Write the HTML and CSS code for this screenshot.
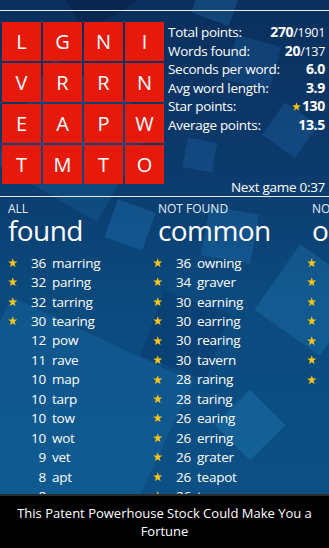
FILE: index.html
```html
<!DOCTYPE html>
<html lang="en">
<head>
<meta charset="utf-8">
<title>Word game results</title>
<link rel="stylesheet" href="styles.css">
</head>
<body>
<div class="screen">
  <div class="bg" aria-hidden="true">
    <span class="sq s1"></span>
    <span class="sq s2"></span>
    <span class="sq s3"></span>
    <span class="sq s4"></span>
    <span class="sq s5"></span>
    <span class="sq s6"></span>
    <span class="sq s7"></span>
    <span class="sq s8"></span>
    <span class="sq s9"></span>
    <span class="sq s10"></span>
    <span class="sq s11"></span>
    <span class="sq s12"></span>
  </div>

  <div class="rule rule-top"></div>

  <section class="game">
    <div class="board">
      <div class="tile">L</div><div class="tile">G</div><div class="tile">N</div><div class="tile">I</div>
      <div class="tile">V</div><div class="tile">R</div><div class="tile">R</div><div class="tile">N</div>
      <div class="tile">E</div><div class="tile">A</div><div class="tile">P</div><div class="tile">W</div>
      <div class="tile">T</div><div class="tile">M</div><div class="tile">T</div><div class="tile">O</div>
    </div>
    <div class="stats">
      <div class="stat-list">
        <div class="stat"><span class="label">Total points:</span><span class="value"><b>270</b><span class="of">/1901</span></span></div>
        <div class="stat"><span class="label">Words found:</span><span class="value"><b>20</b><span class="of">/137</span></span></div>
        <div class="stat"><span class="label">Seconds per word:</span><span class="value"><b>6.0</b></span></div>
        <div class="stat"><span class="label">Avg word length:</span><span class="value"><b>3.9</b></span></div>
        <div class="stat"><span class="label">Star points:</span><span class="value"><svg class="star-sm" viewBox="0 0 10 10"><polygon points="5,0.3 6.2,3.7 9.8,3.8 6.9,6 8,9.6 5,7.5 2,9.6 3.1,6 0.2,3.8 3.8,3.7"/></svg><b>130</b></span></div>
        <div class="stat"><span class="label">Average points:</span><span class="value"><b>13.5</b></span></div>
      </div>
      <div class="next">Next game 0:37</div>
    </div>
  </section>

  <div class="rule rule-mid"></div>

  <section class="lists">
    <div class="col col-all">
      <div class="col-head"><div class="kicker">ALL</div><div class="title">found</div></div>
      <ul class="words">
        <li><svg class="star" viewBox="0 0 10 10"><polygon points="5,0.3 6.2,3.7 9.8,3.8 6.9,6 8,9.6 5,7.5 2,9.6 3.1,6 0.2,3.8 3.8,3.7"/></svg><span class="pts">36</span><span class="word">marring</span></li>
        <li><svg class="star" viewBox="0 0 10 10"><polygon points="5,0.3 6.2,3.7 9.8,3.8 6.9,6 8,9.6 5,7.5 2,9.6 3.1,6 0.2,3.8 3.8,3.7"/></svg><span class="pts">32</span><span class="word">paring</span></li>
        <li><svg class="star" viewBox="0 0 10 10"><polygon points="5,0.3 6.2,3.7 9.8,3.8 6.9,6 8,9.6 5,7.5 2,9.6 3.1,6 0.2,3.8 3.8,3.7"/></svg><span class="pts">32</span><span class="word">tarring</span></li>
        <li><svg class="star" viewBox="0 0 10 10"><polygon points="5,0.3 6.2,3.7 9.8,3.8 6.9,6 8,9.6 5,7.5 2,9.6 3.1,6 0.2,3.8 3.8,3.7"/></svg><span class="pts">30</span><span class="word">tearing</span></li>
        <li><span class="nostar"></span><span class="pts">12</span><span class="word">pow</span></li>
        <li><span class="nostar"></span><span class="pts">11</span><span class="word">rave</span></li>
        <li><span class="nostar"></span><span class="pts">10</span><span class="word">map</span></li>
        <li><span class="nostar"></span><span class="pts">10</span><span class="word">tarp</span></li>
        <li><span class="nostar"></span><span class="pts">10</span><span class="word">tow</span></li>
        <li><span class="nostar"></span><span class="pts">10</span><span class="word">wot</span></li>
        <li><span class="nostar"></span><span class="pts">9</span><span class="word">vet</span></li>
        <li><span class="nostar"></span><span class="pts">8</span><span class="word">apt</span></li>
        <li><span class="nostar"></span><span class="pts">8</span><span class="word">mar</span></li>
      </ul>
    </div>
    <div class="col col-common">
      <div class="col-head"><div class="kicker">NOT FOUND</div><div class="title">common</div></div>
      <ul class="words">
        <li><svg class="star" viewBox="0 0 10 10"><polygon points="5,0.3 6.2,3.7 9.8,3.8 6.9,6 8,9.6 5,7.5 2,9.6 3.1,6 0.2,3.8 3.8,3.7"/></svg><span class="pts">36</span><span class="word">owning</span></li>
        <li><svg class="star" viewBox="0 0 10 10"><polygon points="5,0.3 6.2,3.7 9.8,3.8 6.9,6 8,9.6 5,7.5 2,9.6 3.1,6 0.2,3.8 3.8,3.7"/></svg><span class="pts">34</span><span class="word">graver</span></li>
        <li><svg class="star" viewBox="0 0 10 10"><polygon points="5,0.3 6.2,3.7 9.8,3.8 6.9,6 8,9.6 5,7.5 2,9.6 3.1,6 0.2,3.8 3.8,3.7"/></svg><span class="pts">30</span><span class="word">earning</span></li>
        <li><svg class="star" viewBox="0 0 10 10"><polygon points="5,0.3 6.2,3.7 9.8,3.8 6.9,6 8,9.6 5,7.5 2,9.6 3.1,6 0.2,3.8 3.8,3.7"/></svg><span class="pts">30</span><span class="word">earring</span></li>
        <li><svg class="star" viewBox="0 0 10 10"><polygon points="5,0.3 6.2,3.7 9.8,3.8 6.9,6 8,9.6 5,7.5 2,9.6 3.1,6 0.2,3.8 3.8,3.7"/></svg><span class="pts">30</span><span class="word">rearing</span></li>
        <li><svg class="star" viewBox="0 0 10 10"><polygon points="5,0.3 6.2,3.7 9.8,3.8 6.9,6 8,9.6 5,7.5 2,9.6 3.1,6 0.2,3.8 3.8,3.7"/></svg><span class="pts">30</span><span class="word">tavern</span></li>
        <li><svg class="star" viewBox="0 0 10 10"><polygon points="5,0.3 6.2,3.7 9.8,3.8 6.9,6 8,9.6 5,7.5 2,9.6 3.1,6 0.2,3.8 3.8,3.7"/></svg><span class="pts">28</span><span class="word">raring</span></li>
        <li><svg class="star" viewBox="0 0 10 10"><polygon points="5,0.3 6.2,3.7 9.8,3.8 6.9,6 8,9.6 5,7.5 2,9.6 3.1,6 0.2,3.8 3.8,3.7"/></svg><span class="pts">28</span><span class="word">taring</span></li>
        <li><svg class="star" viewBox="0 0 10 10"><polygon points="5,0.3 6.2,3.7 9.8,3.8 6.9,6 8,9.6 5,7.5 2,9.6 3.1,6 0.2,3.8 3.8,3.7"/></svg><span class="pts">26</span><span class="word">earing</span></li>
        <li><svg class="star" viewBox="0 0 10 10"><polygon points="5,0.3 6.2,3.7 9.8,3.8 6.9,6 8,9.6 5,7.5 2,9.6 3.1,6 0.2,3.8 3.8,3.7"/></svg><span class="pts">26</span><span class="word">erring</span></li>
        <li><svg class="star" viewBox="0 0 10 10"><polygon points="5,0.3 6.2,3.7 9.8,3.8 6.9,6 8,9.6 5,7.5 2,9.6 3.1,6 0.2,3.8 3.8,3.7"/></svg><span class="pts">26</span><span class="word">grater</span></li>
        <li><svg class="star" viewBox="0 0 10 10"><polygon points="5,0.3 6.2,3.7 9.8,3.8 6.9,6 8,9.6 5,7.5 2,9.6 3.1,6 0.2,3.8 3.8,3.7"/></svg><span class="pts">26</span><span class="word">teapot</span></li>
        <li><svg class="star" viewBox="0 0 10 10"><polygon points="5,0.3 6.2,3.7 9.8,3.8 6.9,6 8,9.6 5,7.5 2,9.6 3.1,6 0.2,3.8 3.8,3.7"/></svg><span class="pts">26</span><span class="word">tanner</span></li>
      </ul>
    </div>
    <div class="col col-obscure">
      <div class="col-head"><div class="kicker">NOT FOUND</div><div class="title">obscure</div></div>
      <ul class="words">
        <li><svg class="star" viewBox="0 0 10 10"><polygon points="5,0.3 6.2,3.7 9.8,3.8 6.9,6 8,9.6 5,7.5 2,9.6 3.1,6 0.2,3.8 3.8,3.7"/></svg><span class="pts">32</span><span class="word">varring</span></li>
        <li><svg class="star" viewBox="0 0 10 10"><polygon points="5,0.3 6.2,3.7 9.8,3.8 6.9,6 8,9.6 5,7.5 2,9.6 3.1,6 0.2,3.8 3.8,3.7"/></svg><span class="pts">30</span><span class="word">pareo</span></li>
        <li><svg class="star" viewBox="0 0 10 10"><polygon points="5,0.3 6.2,3.7 9.8,3.8 6.9,6 8,9.6 5,7.5 2,9.6 3.1,6 0.2,3.8 3.8,3.7"/></svg><span class="pts">28</span><span class="word">waring</span></li>
        <li><svg class="star" viewBox="0 0 10 10"><polygon points="5,0.3 6.2,3.7 9.8,3.8 6.9,6 8,9.6 5,7.5 2,9.6 3.1,6 0.2,3.8 3.8,3.7"/></svg><span class="pts">26</span><span class="word">graven</span></li>
        <li><svg class="star" viewBox="0 0 10 10"><polygon points="5,0.3 6.2,3.7 9.8,3.8 6.9,6 8,9.6 5,7.5 2,9.6 3.1,6 0.2,3.8 3.8,3.7"/></svg><span class="pts">26</span><span class="word">rewan</span></li>
        <li><svg class="star" viewBox="0 0 10 10"><polygon points="5,0.3 6.2,3.7 9.8,3.8 6.9,6 8,9.6 5,7.5 2,9.6 3.1,6 0.2,3.8 3.8,3.7"/></svg><span class="pts">24</span><span class="word">tawer</span></li>
        <li><svg class="star" viewBox="0 0 10 10"><polygon points="5,0.3 6.2,3.7 9.8,3.8 6.9,6 8,9.6 5,7.5 2,9.6 3.1,6 0.2,3.8 3.8,3.7"/></svg><span class="pts">24</span><span class="word">apter</span></li>
        <li><span class="nostar"></span><span class="pts">22</span><span class="word">ravin</span></li>
        <li><span class="nostar"></span><span class="pts">20</span><span class="word">arpen</span></li>
      </ul>
    </div>
  </section>

  <aside class="ad">
    <p>This Patent Powerhouse Stock Could Make You a Fortune</p>
  </aside>
</div>
</body>
</html>
```

FILE: styles.css
```css
* { box-sizing: border-box; }

html, body {
  margin: 0;
  padding: 0;
}

body {
  width: 329px;
  height: 548px;
  overflow: hidden;
  font-family: "Open Sans", "Noto Sans", "Liberation Sans", sans-serif;
  color: #ffffff;
  background: #0b4377;
}

.screen {
  position: relative;
  width: 329px;
  height: 548px;
  overflow: hidden;
  display: flex;
  flex-direction: column;
  background: linear-gradient(180deg, #0a2f5c 0%, #0b3a6c 30%, #0b4a7e 55%, #0c5287 100%);
}

/* decorative scattered squares behind everything */
.bg {
  position: absolute;
  inset: 0;
  z-index: 0;
  pointer-events: none;
}
.sq {
  position: absolute;
  display: block;
  background: rgba(40, 130, 195, 0.28);
}
.s1 { left: 70px;  top: -20px; width: 60px; height: 40px; transform: rotate(-30deg); background: rgba(5, 30, 70, 0.5); }
.s2 { left: 195px; top: -10px; width: 40px; height: 30px; transform: rotate(20deg); }
.s3 { left: 230px; top: 40px;  width: 46px; height: 46px; transform: rotate(15deg); background: rgba(40, 120, 190, 0.22); }
.s4 { left: 270px; top: 110px; width: 40px; height: 40px; transform: rotate(35deg); background: rgba(40, 120, 190, 0.25); }
.s5 { left: 185px; top: 140px; width: 30px; height: 30px; transform: rotate(10deg); background: rgba(40, 120, 190, 0.25); }
.s6 { left: 110px; top: 205px; width: 40px; height: 40px; transform: rotate(20deg); background: rgba(40, 130, 200, 0.3); }
.s7 { left: 205px; top: 210px; width: 50px; height: 50px; transform: rotate(10deg); background: rgba(40, 130, 200, 0.25); }
.s8 { left: -40px; top: 330px; width: 200px; height: 200px; transform: rotate(25deg); background: rgba(30, 120, 180, 0.28); }
.s9 { left: 270px; top: 260px; width: 80px; height: 80px; transform: rotate(35deg); background: rgba(40, 140, 200, 0.25); }
.s10 { left: 225px; top: 400px; width: 50px; height: 50px; transform: rotate(45deg); background: rgba(40, 140, 200, 0.3); }
.s11 { left: 150px; top: 300px; width: 70px; height: 70px; transform: rotate(20deg); background: rgba(8, 50, 100, 0.35); }
.s12 { left: 15px;  top: 80px;  width: 120px; height: 120px; transform: rotate(30deg); background: rgba(30, 110, 170, 0.25); }

.rule {
  position: relative;
  z-index: 1;
  height: 1px;
  background: #e6edf4;
  flex: none;
}
.rule-top { margin-top: 10px; }

.game {
  position: relative;
  z-index: 1;
  flex: none;
  height: 185px;
  padding: 11px 4px 0 2px;
  display: flex;
  gap: 4px;
}

.board {
  display: grid;
  grid-template-columns: repeat(4, 39px);
  grid-template-rows: repeat(4, 39px);
  gap: 2px;
  align-self: flex-start;
}
.tile {
  background: #e51a0b;
  display: flex;
  align-items: center;
  justify-content: center;
  font-size: 20px;
  line-height: 1;
  color: #ffffff;
}

.stats {
  flex: 1;
  display: flex;
  flex-direction: column;
  font-size: 13.5px;
  letter-spacing: -0.3px;
}
.stat-list { padding-top: 1px; }
.stat {
  display: flex;
  justify-content: space-between;
  align-items: baseline;
  height: 18.5px;
  line-height: 18.5px;
}
.value b { font-weight: 700; font-size: 14px; }
.value .of { font-size: 12.5px; }
.value { display: flex; align-items: baseline; }
.star-sm {
  width: 9px;
  height: 9px;
  fill: #f6c416;
  margin-right: 1px;
  align-self: center;
}
.next {
  margin-top: auto;
  text-align: right;
  line-height: 17px;
  padding-bottom: 0;
}

.lists {
  position: relative;
  z-index: 1;
  flex: 1;
  min-height: 0;
  overflow: hidden;
  display: flex;
  padding-left: 8px;
}

.col { flex: none; }
.col-all { width: 145px; }
.col-common { width: 154px; }
.col-obscure { width: 160px; }
.col-common .col-head,
.col-obscure .col-head { padding-left: 5px; }

.col-head { padding-top: 4px; }
.kicker {
  font-size: 12px;
  line-height: 15px;
  color: #e4ecf4;
}
.title {
  font-size: 28px;
  line-height: 28px;
  letter-spacing: -0.6px;
}

.words {
  list-style: none;
  margin: 9px 0 0 0;
  padding: 0;
}
.words li {
  display: flex;
  align-items: center;
  height: 19.45px;
  font-size: 13.5px;
  letter-spacing: -0.25px;
  white-space: nowrap;
}
.star, .nostar {
  width: 9.5px;
  height: 9.5px;
  flex: none;
}
.star { fill: #f6c416; }
.pts {
  width: 28.5px;
  text-align: right;
  flex: none;
}
.word { margin-left: 6px; }

.ad {
  position: relative;
  z-index: 2;
  flex: none;
  height: 54px;
  background: #000000;
  border-top: 2px solid #2b2b2b;
  display: flex;
  align-items: center;
  justify-content: center;
}
.ad p {
  margin: 0;
  width: 300px;
  text-align: center;
  font-size: 13px;
  line-height: 18px;
  color: #ffffff;
}
```
